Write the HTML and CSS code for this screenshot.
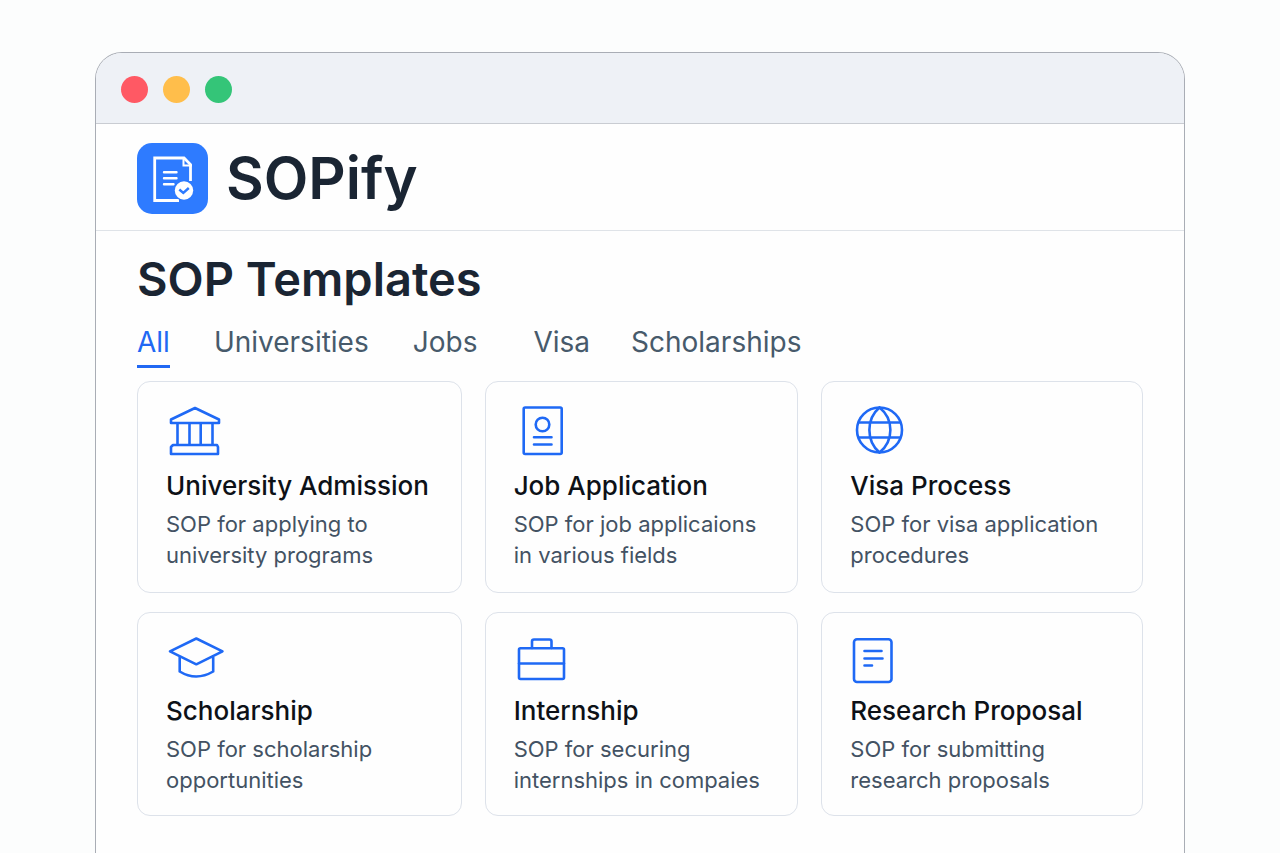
FILE: index.html
```html
<!DOCTYPE html>
<html lang="en">
<head>
<meta charset="utf-8">
<meta name="viewport" content="width=device-width, initial-scale=1">
<title>SOPify</title>
<link rel="stylesheet" href="styles.css">
</head>
<body>
<div class="window">
  <div class="titlebar">
    <span class="dot dot-red"></span>
    <span class="dot dot-yellow"></span>
    <span class="dot dot-green"></span>
  </div>
  <header class="header">
    <svg class="logo" viewBox="0 0 71 71" aria-hidden="true">
      <rect width="71" height="71" rx="15" fill="#2e7bff"/>
      <path d="M42 57.500H17.700V15H47L53.500 21.500V38" fill="none" stroke="#fff" stroke-width="2.800"/>
      <path d="M46.500 14V22.500H55" fill="none" stroke="#fff" stroke-width="2"/>
      <path d="M27 29.200H39.500M27 35.300H39.500M27 41.300H36.500" stroke="#fff" stroke-width="2.400" stroke-linecap="round"/>
      <circle cx="47" cy="47.500" r="10.500" fill="#2e7bff"/>
      <circle cx="47" cy="47.500" r="9.200" fill="#fff"/>
      <path d="M42.300 46.500L46.300 50L51.800 45" fill="none" stroke="#2e7bff" stroke-width="2.400"/>
    </svg>
    <span class="brand">SOPify</span>
  </header>
  <main class="content">
    <h1 class="heading">SOP Templates</h1>
    <nav class="tabs" aria-label="Template categories">
      <a class="tab tab-active" href="#all" aria-current="page">All</a>
      <a class="tab" href="#universities">Universities</a>
      <a class="tab" href="#jobs">Jobs</a>
      <a class="tab tab-visa" href="#visa">Visa</a>
      <a class="tab" href="#scholarships">Scholarships</a>
    </nav>
    <div class="grid">
      <article class="card">
        <svg class="icon" viewBox="0 0 60 50" aria-hidden="true">
          <path d="M5 13.500L29 2L53 13.500V17H5ZM11.500 17V39M23.500 17V39M34.700 17V39M46.500 17V39M7 39H51L52 41V48H5V41Z"/>
        </svg>
        <h2 class="card-title">University Admission</h2>
        <p class="card-text">SOP for applying to<br>university programs</p>
      </article>
      <article class="card">
        <svg class="icon" viewBox="0 0 60 50" aria-hidden="true">
          <rect x="9.700" y="1.500" width="38" height="46.500" rx="1.500"/>
          <circle cx="28.500" cy="18.500" r="6.800"/>
          <path d="M20 31.300H37.500M20 38.500H37.500"/>
        </svg>
        <h2 class="card-title">Job Application</h2>
        <p class="card-text">SOP for job applicaions<br>in various fields</p>
      </article>
      <article class="card">
        <svg class="icon" viewBox="0 0 60 50" aria-hidden="true">
          <circle cx="29.500" cy="24" r="22.500"/>
          <path d="M9.500 16.500H49.500M9.500 31.500H49.500M29.500 1.500C16 13 16 35 29.500 46.500M29.500 1.500C44 13 44 35 29.500 46.500"/>
        </svg>
        <h2 class="card-title">Visa Process</h2>
        <p class="card-text">SOP for visa application<br>procedures</p>
      </article>
      <article class="card card-compact">
        <svg class="icon icon-short" viewBox="0 0 60 44" aria-hidden="true">
          <path d="M4 14.300L30.300 1.500L56.500 14.300L30.300 27.300ZM13.700 19.500V34.500Q30 44.500 47.200 34.500V19.500"/>
        </svg>
        <h2 class="card-title">Scholarship</h2>
        <p class="card-text">SOP for scholarship<br>opportunities</p>
      </article>
      <article class="card card-compact">
        <svg class="icon icon-short" viewBox="0 0 60 44" aria-hidden="true">
          <rect x="5" y="11.300" width="45" height="30.700" rx="1.500"/>
          <path d="M5 26.500H50M18 11V4.500Q18 2.500 20 2.500H35.500Q37.500 2.500 37.500 4.500V11"/>
        </svg>
        <h2 class="card-title">Internship</h2>
        <p class="card-text">SOP for securing<br>internships in compaies</p>
      </article>
      <article class="card card-compact">
        <svg class="icon icon-short" viewBox="0 0 60 44" aria-hidden="true">
          <rect x="4" y="2.300" width="37.500" height="42.700" rx="3"/>
          <path d="M14.500 14H31.500M14.500 21.500H32.500M14.500 28.500H22"/>
        </svg>
        <h2 class="card-title">Research Proposal</h2>
        <p class="card-text">SOP for submitting<br>research proposals</p>
      </article>
    </div>
  </main>
</div>
</body>
</html>
```
FILE: styles.css
```css
* {
  box-sizing: border-box;
}

body {
  margin: 0;
  padding: 52px 95px 0;
  background: #fcfdfd;
  color: #1a2533;
  font-family: Inter, "Liberation Sans", sans-serif;
}

.window {
  min-height: calc(100vh - 52px);
  border: 1px solid #a9adb5;
  border-bottom: 0;
  border-radius: 27px 27px 0 0;
  background: #fefefe;
  overflow: hidden;
}

.titlebar {
  display: flex;
  align-items: center;
  gap: 15px;
  height: 71px;
  padding: 2px 25px 0;
  border-bottom: 1px solid #c9ccd2;
  background: #eef1f6;
}

.dot {
  width: 27px;
  height: 27px;
  border-radius: 50%;
}

.dot-red {
  background: #ff5964;
}

.dot-yellow {
  background: #ffbe4b;
}

.dot-green {
  background: #34c578;
}

.header {
  display: flex;
  align-items: center;
  gap: 18px;
  padding: 18px 40px 16px 41px;
  border-bottom: 1px solid #dfe3e8;
}

.logo {
  width: 71px;
  height: 71px;
}

.brand {
  font-size: 58px;
  font-weight: 600;
  line-height: 72px;
}

.content {
  padding: 20px 41px 36px;
}

.heading {
  margin: 0 0 18px;
  font-size: 47px;
  font-weight: 600;
  line-height: 56px;
}

.tabs {
  display: flex;
  gap: 44px;
  margin-bottom: 13px;
}

.tab {
  padding-bottom: 6px;
  border-bottom: 3px solid transparent;
  color: #475a6b;
  font-size: 28px;
  line-height: 34px;
  text-decoration: none;
}

.tab-active {
  border-color: #2168f3;
  color: #2168f3;
}

.tab-visa {
  margin: 0 -3px 0 12px;
}

.grid {
  display: grid;
  grid-template-columns: 325fr 314fr 322fr;
  gap: 19px 23px;
}

.card {
  padding: 24px 28px 21px;
  border: 1px solid #dde2ea;
  border-radius: 13px;
}

.card-compact {
  padding-bottom: 19px;
}

.icon {
  display: block;
  width: 60px;
  height: 50px;
  overflow: visible;
  fill: none;
  stroke: #1f69f5;
  stroke-width: 2.6px;
  stroke-linecap: round;
  stroke-linejoin: round;
}

.icon-short {
  height: 44px;
}

.card-title {
  margin: 14px 0 7px;
  color: #0d1117;
  font-size: 26px;
  font-weight: 500;
  line-height: 32px;
  white-space: nowrap;
}

.card-text {
  margin: 0;
  color: #435263;
  font-size: 22px;
  line-height: 31px;
}
```
